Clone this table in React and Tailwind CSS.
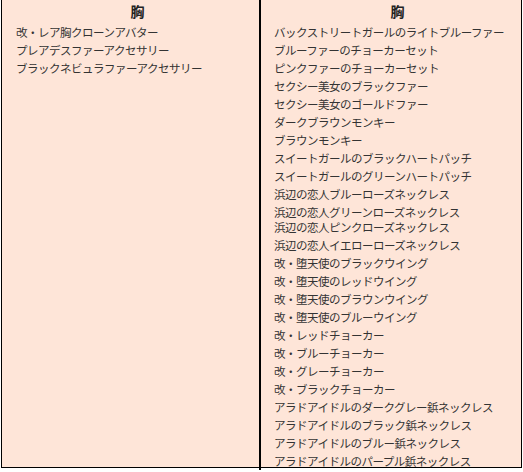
// Two-column item table: header "胸" over each column, item names listed below.
import React from 'react';

const left = [
  '改・レア胸クローンアバター',
  'プレアデスファーアクセサリー',
  'ブラックネビュラファーアクセサリー',
];

const right = [
  'バックストリートガールのライトブルーファー',
  'ブルーファーのチョーカーセット',
  'ピンクファーのチョーカーセット',
  'セクシー美女のブラックファー',
  'セクシー美女のゴールドファー',
  'ダークブラウンモンキー',
  'ブラウンモンキー',
  'スイートガールのブラックハートパッチ',
  'スイートガールのグリーンハートパッチ',
  '浜辺の恋人ブルーローズネックレス',
  ['浜辺の恋人グリーンローズネックレス', '浜辺の恋人ピンクローズネックレス'],
  '浜辺の恋人イエローローズネックレス',
  '改・堕天使のブラックウイング',
  '改・堕天使のレッドウイング',
  '改・堕天使のブラウンウイング',
  '改・堕天使のブルーウイング',
  '改・レッドチョーカー',
  '改・ブルーチョーカー',
  '改・グレーチョーカー',
  '改・ブラックチョーカー',
  'アラドアイドルのダークグレー鋲ネックレス',
  'アラドアイドルのブラック鋲ネックレス',
  'アラドアイドルのブルー鋲ネックレス',
  'アラドアイドルのパープル鋲ネックレス',
];

function Item({ value }) {
  const lines = Array.isArray(value) ? value : [value];
  return (
    <div className="py-[1.5px] leading-[15px]">
      {lines.map((l) => (
        <div key={l}>{l}</div>
      ))}
    </div>
  );
}

function Column({ items, className = '' }) {
  return (
    <div className={`flex flex-col ${className}`}>
      <div className="h-[23px] flex items-center justify-center font-bold text-[14px] tracking-normal text-[#222]">胸</div>
      <div className="flex flex-col">
        {items.map((it, i) => (
          <Item key={i} value={it} />
        ))}
      </div>
    </div>
  );
}

export default function App() {
  return (
    <div className="w-[523px] h-[472px] bg-white overflow-hidden font-['Noto_Sans_CJK_JP','Noto_Sans',sans-serif] text-[11.5px] tracking-[-0.5px] text-[#333]">
      <div className="ml-[1px] w-[521px] h-[468px] bg-[#fee5d8] border-x border-b border-black grid grid-cols-[259px_1fr]">
        <Column items={left} className="pl-[14px] border-r-2 border-black" />
        <Column items={right} className="pl-[13px]" />
      </div>
    </div>
  );
}
